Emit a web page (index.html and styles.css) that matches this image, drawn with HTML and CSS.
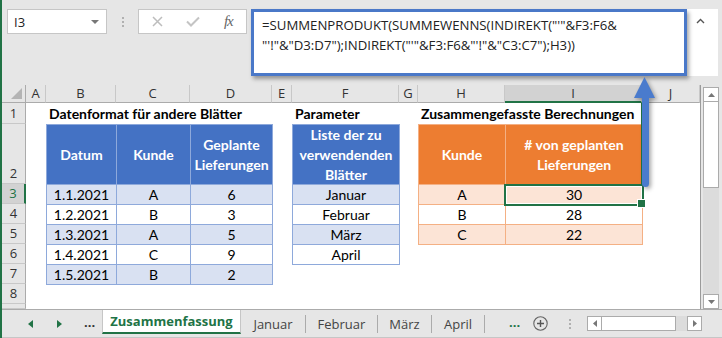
FILE: index.html
```html
<!DOCTYPE html>
<html lang="de">
<head>
    <meta charset="UTF-8">
    <meta name="viewport" content="width=device-width, initial-scale=1.0">
    <title>Zusammenfassung</title>
    <link rel="stylesheet" href="styles.css">
</head>
<body>
<div class="window">

    <div class="formula-area">
        <div class="namebox">
            <span>I3</span>
            <span class="caret"></span>
        </div>
        <div class="grip"><i></i><i></i><i></i></div>
        <div class="fxbox">
            <span class="fx-btn">
                <svg width="11" height="11" viewBox="0 0 11 11"><path d="M1 1L10 10M10 1L1 10" stroke="#bdbdbd" stroke-width="1.5"/></svg>
            </span>
            <span class="fx-btn">
                <svg width="14" height="11" viewBox="0 0 14 11"><path d="M1 5.5L5 9.5L13 1.5" fill="none" stroke="#c4c4c4" stroke-width="2"/></svg>
            </span>
            <span class="fx-btn fx">fx</span>
        </div>
        <div class="formula">
            <div class="callout">=SUMMENPRODUKT(SUMMEWENNS(INDIREKT("'"&amp;F3:F6&amp;<br>"'!"&amp;"D3:D7");INDIREKT("'"&amp;F3:F6&amp;"'!"&amp;"C3:C7");H3))</div>
            <div class="formula-up">
                <svg width="9" height="6" viewBox="0 0 9 6"><path d="M1 5L4.5 1.5L8 5" fill="none" stroke="#555" stroke-width="1.4"/></svg>
            </div>
        </div>
    </div>

    <div class="sheet-area">
        <div class="sheet">
            <div class="corner"><span class="corner-tri"></span></div>
            <div class="colhead">A</div>
            <div class="colhead">B</div>
            <div class="colhead">C</div>
            <div class="colhead">D</div>
            <div class="colhead">E</div>
            <div class="colhead">F</div>
            <div class="colhead">G</div>
            <div class="colhead">H</div>
            <div class="colhead sel">I</div>
            <div class="colhead">J</div>

            <div class="rowhead r1">1</div>
            <div class="rowhead r2">2</div>
            <div class="rowhead r3 sel">3</div>
            <div class="rowhead r4">4</div>
            <div class="rowhead r5">5</div>
            <div class="rowhead r6">6</div>
            <div class="rowhead r7">7</div>
            <div class="rowhead r8">8</div>
            <div class="rowhead r9"></div>

            <div class="title title-b">Datenformat für andere Blätter</div>
            <div class="title title-f">Parameter</div>
            <div class="title title-h">Zusammengefasste Berechnungen</div>

            <div class="tbl blue t1">
                <div class="row head">
                    <div>Datum</div><div>Kunde</div><div>Geplante<br>Lieferungen</div>
                </div>
                <div class="row band"><div>1.1.2021</div><div>A</div><div>6</div></div>
                <div class="row"><div>1.2.2021</div><div>B</div><div>3</div></div>
                <div class="row band"><div>1.3.2021</div><div>A</div><div>5</div></div>
                <div class="row"><div>1.4.2021</div><div>C</div><div>9</div></div>
                <div class="row band"><div>1.5.2021</div><div>B</div><div>2</div></div>
            </div>

            <div class="tbl blue t2">
                <div class="row head"><div>Liste der zu<br>verwendenden<br>Blätter</div></div>
                <div class="row band"><div>Januar</div></div>
                <div class="row"><div>Februar</div></div>
                <div class="row band"><div>März</div></div>
                <div class="row"><div>April</div></div>
            </div>

            <div class="tbl orange t3">
                <div class="row head"><div>Kunde</div><div># von geplanten<br>Lieferungen</div></div>
                <div class="row band"><div>A</div><div class="active">30</div></div>
                <div class="row"><div>B</div><div>28</div></div>
                <div class="row band"><div>C</div><div>22</div></div>
            </div>

            <div class="sel-edge"></div>
        </div>

        <div class="vscroll">
            <div class="vbtn">
                <svg width="7" height="4" viewBox="0 0 7 4"><path d="M0 4L3.5 0L7 4Z" fill="#777"/></svg>
            </div>
            <div class="vthumb"></div>
            <div class="vtrack"></div>
            <div class="vbtn">
                <svg width="7" height="4" viewBox="0 0 7 4"><path d="M0 0L3.5 4L7 0Z" fill="#777"/></svg>
            </div>
        </div>
    </div>

    <div class="tabbar">
        <div class="tabnav">
            <svg width="5" height="8" viewBox="0 0 5 8"><path d="M5 0L0 4L5 8Z" fill="#217346"/></svg>
            <svg width="5" height="8" viewBox="0 0 5 8"><path d="M0 0L5 4L0 8Z" fill="#217346"/></svg>
            <span class="dots">...</span>
        </div>
        <div class="tab active-tab">Zusammenfassung</div>
        <div class="tab t-jan">Januar</div>
        <div class="tab t-feb">Februar</div>
        <div class="tab t-mar">März</div>
        <div class="tab t-apr">April</div>
        <span class="more">...</span>
        <span class="add">
            <svg width="15" height="15" viewBox="0 0 15 15"><circle cx="7.5" cy="7.5" r="6.7" fill="none" stroke="#666" stroke-width="1.1"/><path d="M7.5 4V11M4 7.5H11" stroke="#555" stroke-width="1.4"/></svg>
        </span>
        <div class="grip grip-tabs"><i></i><i></i><i></i></div>
        <div class="hscroll">
            <div class="hbtn">
                <svg width="4" height="7" viewBox="0 0 4 7"><path d="M4 0L0 3.5L4 7Z" fill="#777"/></svg>
            </div>
            <div class="hthumb"></div>
            <div class="htrack"></div>
            <div class="hbtn">
                <svg width="4" height="7" viewBox="0 0 4 7"><path d="M0 0L4 3.5L0 7Z" fill="#777"/></svg>
            </div>
        </div>
    </div>

    <svg class="arrow" width="26" height="118" viewBox="0 0 26 118">
        <path d="M12.5 2L23 23L17 23L17 108.5A3.5 3.5 0 0 1 10 108.5L10 23L2 23Z" fill="#4a7bcd"/>
    </svg>
</div>
</body>
</html>
```

FILE: styles.css
```css
* {
    box-sizing: border-box;
}

body {
    margin: 0;
    width: 722px;
    height: 338px;
    overflow: hidden;
    background: #e6e6e6;
    font-family: "Open Sans", "Noto Sans", sans-serif;
    color: #222;
}

.window {
    position: relative;
    width: 722px;
    height: 338px;
    border-left: 2px solid #217346;
    background: #e6e6e6;
}

/* formula bar */

.formula-area {
    height: 85px;
    display: flex;
    align-items: flex-start;
    padding: 9px 0 0 5px;
}

.namebox {
    width: 100px;
    height: 25px;
    background: #fff;
    border: 1px solid #c6c6c6;
    display: flex;
    align-items: center;
    justify-content: space-between;
    padding: 0 7px 0 6px;
    font-size: 13px;
}

.caret {
    width: 0;
    height: 0;
    border-left: 4px solid transparent;
    border-right: 4px solid transparent;
    border-top: 4px solid #777;
}

.grip {
    width: 31px;
    height: 25px;
    display: flex;
    flex-direction: column;
    align-items: center;
    justify-content: center;
    gap: 2px;
}

.grip i {
    width: 2px;
    height: 2px;
    background: #b0b0b0;
}

.fxbox {
    width: 109px;
    height: 25px;
    background: #fff;
    border: 1px solid #c6c6c6;
    display: flex;
    align-items: center;
}

.fx-btn {
    width: 36px;
    display: flex;
    justify-content: center;
}

.fx-btn:first-child {
    margin-left: 1px;
}

.fx {
    font-family: "Liberation Serif", serif;
    font-style: italic;
    font-size: 15px;
    color: #666;
    letter-spacing: -1px;
}

.formula {
    margin-left: 4px;
    width: 467px;
    height: 67px;
    background: #fff;
    display: flex;
}

.callout {
    width: 436px;
    height: 67px;
    border: 3px solid #4a78c8;
    box-shadow: 2px 3px 4px rgba(0, 0, 0, 0.35);
    padding: 3px 0 0 8px;
    font-size: 13.2px;
    line-height: 20px;
    color: #222;
    white-space: nowrap;
}

.formula-up {
    flex: 1;
    display: flex;
    justify-content: center;
    padding: 9px 4px 0 0;
}

/* sheet */

.sheet-area {
    display: flex;
    height: 224px;
}

.sheet {
    width: 698px;
    background: #fff;
    display: grid;
    grid-template-columns: 24px 20px 70px 74px 82px 20px 107px 19px 87px 137px 58px;
    grid-template-rows: 18px 21px 60px repeat(6, 20px) 5px;
    font-family: "Lato", "Carlito", sans-serif;
    font-size: 14px;
    color: #000;
}

.corner {
    position: relative;
    background: #e6e6e6;
    border-right: 1px solid #ababab;
    border-bottom: 1px solid #ababab;
}

.corner-tri {
    position: absolute;
    right: 3px;
    bottom: 3px;
    width: 0;
    height: 0;
    border-left: 11px solid transparent;
    border-bottom: 11px solid #b4b4b4;
}

.colhead {
    background: #e6e6e6;
    border-right: 1px solid #c8c8c8;
    border-bottom: 1px solid #ababab;
    font-family: "Open Sans", sans-serif;
    font-size: 13px;
    line-height: 17px;
    text-align: center;
    color: #333;
}

.colhead.sel {
    background: #d2d2d2;
    border-bottom: 2px solid #217346;
}

.rowhead {
    grid-column: 1;
    background: #e6e6e6;
    border-right: 1px solid #ababab;
    border-bottom: 1px solid #c8c8c8;
    font-family: "Open Sans", sans-serif;
    font-size: 13px;
    line-height: 19px;
    text-align: center;
    color: #333;
    display: flex;
    align-items: flex-end;
    justify-content: center;
}

.rowhead.sel {
    background: #d2d2d2;
    border-right: 2px solid #217346;
    color: #217346;
}

.r1 { grid-row: 2; }
.r2 { grid-row: 3; }
.r3 { grid-row: 4; }
.r4 { grid-row: 5; }
.r5 { grid-row: 6; }
.r6 { grid-row: 7; }
.r7 { grid-row: 8; }
.r8 { grid-row: 9; }
.r9 { grid-row: 10; }

.title {
    grid-row: 2;
    font-weight: bold;
    line-height: 20px;
    padding-left: 3px;
    align-self: end;
    white-space: nowrap;
}

.title-b { grid-column: 3 / 6; }
.title-f { grid-column: 7 / 8; }
.title-h { grid-column: 9 / 12; }

/* tables */

.tbl {
    display: grid;
    align-self: start;
    justify-self: start;
    border-right: 1px solid var(--line);
    border-bottom: 1px solid var(--line);
}

.tbl.blue {
    --line: #8ea9db;
    --head: #4472c4;
    --band: #d9e1f2;
}

.tbl.orange {
    --line: #f4b084;
    --head: #ed7d31;
    --band: #fce4d6;
}

.t1 {
    grid-column: 3 / 6;
    grid-row: 3 / 9;
    grid-template-columns: 70px 74px 82px;
    grid-template-rows: 60px repeat(5, 20px);
}

.t2 {
    grid-column: 7 / 8;
    grid-row: 3 / 8;
    grid-template-columns: 107px;
    grid-template-rows: 60px repeat(4, 20px);
}

.t3 {
    grid-column: 9 / 11;
    grid-row: 3 / 7;
    grid-template-columns: 87px 137px;
    grid-template-rows: 60px repeat(3, 20px);
}

.row {
    display: contents;
}

.row > div {
    border-left: 1px solid var(--line);
    border-top: 1px solid var(--line);
    text-align: center;
    line-height: 19px;
    white-space: nowrap;
}

.row.band > div {
    background: var(--band);
}

.row.head > div {
    background: var(--head);
    color: #fff;
    font-weight: bold;
    line-height: 20px;
    display: flex;
    align-items: center;
    justify-content: center;
}

.active {
    position: relative;
}

.active::after {
    content: "";
    position: absolute;
    left: -2px;
    top: -1px;
    right: -2px;
    bottom: -2px;
    border: 2px solid #217346;
    box-shadow: inset 0 0 0 1px #fff;
}

.active::before {
    content: "";
    position: absolute;
    right: -4px;
    bottom: -4px;
    width: 7px;
    height: 7px;
    background: #217346;
    border: 1px solid #fff;
    z-index: 1;
}

.sel-edge {
    grid-column: 10;
    grid-row: 2 / 4;
    justify-self: end;
    width: 2px;
    margin-right: -1px;
    background: #217346;
}

/* vertical scrollbar */

.vscroll {
    width: 22px;
    border-left: 1px solid #9b9b9b;
    padding: 2px 3px 0 2px;
    display: flex;
    flex-direction: column;
}

.vbtn {
    height: 15px;
    background: #fff;
    border: 1px solid #ababab;
    display: flex;
    align-items: center;
    justify-content: center;
}

.vthumb {
    height: 86px;
    background: #fff;
    border: 1px solid #ababab;
    border-top: none;
}

.vtrack {
    flex: 1;
    background: #dcdcdc;
}

/* sheet tabs */

.tabbar {
    height: 29px;
    border-top: 1px solid #ababab;
    border-bottom: 1px solid #c6c6c6;
    display: flex;
    align-items: center;
    font-size: 13px;
}

.tabnav {
    width: 100px;
    display: flex;
    align-items: center;
    gap: 24px;
    padding-left: 26px;
}

.dots {
    font-weight: bold;
    color: #333;
    margin-left: -2px;
    line-height: 10px;
    padding-bottom: 4px;
}

.tab {
    height: 18px;
    line-height: 18px;
    border-right: 1px solid #ababab;
    text-align: center;
    color: #444;
}

.active-tab {
    width: 139px;
    height: 24px;
    align-self: flex-start;
    line-height: 22px;
    background: #fff;
    border-left: 1px solid #c6c6c6;
    border-right: 1px solid #c6c6c6;
    border-bottom: 2px solid #217346;
    color: #217346;
    font-weight: bold;
}

.t-jan { width: 65px; }
.t-feb { width: 72px; }
.t-mar { width: 54px; }
.t-apr { width: 53px; }

.more {
    margin-left: 24px;
    width: 17px;
    color: #217346;
    font-weight: bold;
    line-height: 10px;
    padding-bottom: 4px;
}

.add {
    margin-left: 7px;
    display: flex;
}

.grip-tabs {
    width: 2px;
    height: 16px;
    margin-left: 21px;
}

.hscroll {
    margin-left: 16px;
    height: 15px;
    display: flex;
}

.hbtn {
    width: 15px;
    background: #fff;
    border: 1px solid #ababab;
    display: flex;
    align-items: center;
    justify-content: center;
}

.hthumb {
    width: 74px;
    background: #fff;
    border: 1px solid #ababab;
    border-left: none;
}

.htrack {
    width: 11px;
    background: #dcdcdc;
}

/* callout arrow over the sheet */

.arrow {
    position: absolute;
    left: 630px;
    top: 75px;
    filter: drop-shadow(2px 2px 2px rgba(0, 0, 0, 0.35));
}
```
